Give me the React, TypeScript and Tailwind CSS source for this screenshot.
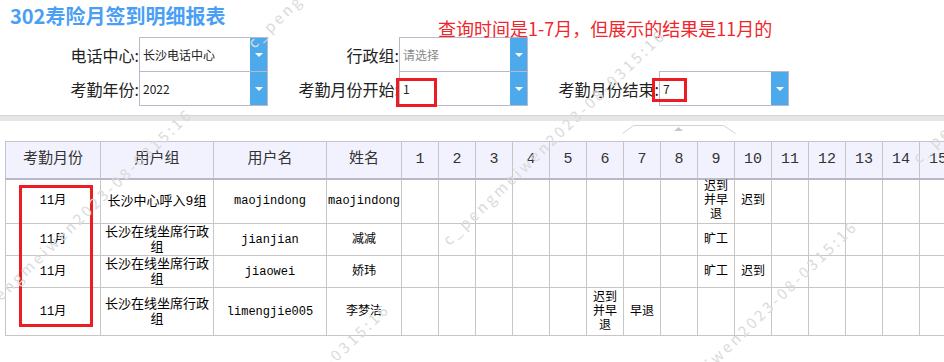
import React from 'react';

const days = Array.from({ length: 31 }, (_, i) => i + 1);

type Row = {
  month: string;
  group: string;
  user: string;
  name: string;
  h: string;
  marks: Record<number, string>;
};

const rows: Row[] = [
  { month: '11月', group: '长沙中心呼入9组', user: 'maojindong', name: 'maojindong', h: 'h-[45px]', marks: { 9: '迟到并早退', 10: '迟到' } },
  { month: '11月', group: '长沙在线坐席行政组', user: 'jianjian', name: '减减', h: 'h-[32px]', marks: { 9: '旷工' } },
  { month: '11月', group: '长沙在线坐席行政组', user: 'jiaowei', name: '娇玮', h: 'h-[32px]', marks: { 9: '旷工', 10: '迟到' } },
  { month: '11月', group: '长沙在线坐席行政组', user: 'limengjie005', name: '李梦洁', h: 'h-[48px]', marks: { 6: '迟到并早退', 7: '早退' } },
];

const cjk = "font-['Noto_Sans_CJK_SC','Liberation_Sans',sans-serif]";
const mono = "font-['Liberation_Mono','Noto_Sans_CJK_SC',monospace]";

function Select({ value, muted, width }: { value: string; muted?: boolean; width: string }) {
  return (
    <div className={`flex h-[35px] border border-[#b9b9c9] bg-white ${width}`}>
      <div className={`flex flex-1 items-center pl-[3px] text-[12px] ${muted ? 'text-[#8a8a8a]' : 'text-[#222]'}`}>
        {value}
      </div>
      <div className="flex w-[17px] items-center justify-center bg-[#4ba9ec]">
        <svg width="8" height="4" viewBox="0 0 8 4">
          <path d="M0 0 L8 0 L4 4 Z" fill="#fff" />
        </svg>
      </div>
    </div>
  );
}

function Label({ text, width }: { text: string; width: string }) {
  return <div className={`text-right text-[16px] text-[#222] ${width}`}>{text}</div>;
}

const cell = 'border border-[#c6c6c6] px-px text-center align-middle text-[12px] leading-[14px] text-black';
const head = 'border border-[#c6c6c6] border-b-2 border-b-[#b9b9c4] bg-[#f2f2fe] px-px text-center align-middle text-[15px] font-normal text-[#333]';

const mark = 'pointer-events-none absolute origin-bottom-left -rotate-[44deg] whitespace-nowrap text-[15px] leading-[15px] tracking-[3px] text-[#dadada] font-[\'Liberation_Sans\',sans-serif]';
const wm = 'c_pengmeiwen2023-08-0315:16';

export default function App() {
  return (
    <div className={`relative h-[362px] w-full overflow-hidden bg-white ${cjk}`}>
      <div className="h-[37px] pl-[10px] pt-[2px] text-[20px] font-bold leading-[28px] text-[#4a9ff5]">
        302寿险月签到明细报表
      </div>

      <div className="flex items-center">
        <Label text="电话中心:" width="w-[139px]" />
        <Select value="长沙电话中心" width="w-[129px]" />
        <Label text="行政组:" width="w-[131px]" />
        <Select value="请选择" muted width="w-[129px]" />
      </div>
      <div className="-mt-px flex items-center">
        <Label text="考勤年份:" width="w-[139px]" />
        <Select value="2022" width="w-[129px]" />
        <Label text="考勤月份开始:" width="w-[131px]" />
        <Select value="1" width="w-[129px]" />
        <Label text="考勤月份结束:" width="w-[131px]" />
        <Select value="7" width="w-[130px]" />
      </div>

      <div className="mt-[9px] h-[6px] border-t border-[#d4d4d4] bg-[#e6e6e6]" />
      <div className="mt-[4px] ml-[622px] h-[9px]">
        <svg width="114" height="9" viewBox="0 0 114 9">
          <path d="M0.5 8.5 L11.5 0.5 L101.5 0.5 L113.5 8.5" fill="none" stroke="#d2d2d2" />
          <path d="M52 6 L56.5 2 L61 6 Z" fill="#c8c8c8" />
        </svg>
      </div>

      <div className="ml-[5px] mt-[7px]">
        <table className={`w-[1543px] table-fixed border-collapse ${mono}`}>
          <colgroup>
            <col className="w-[95px]" />
            <col className="w-[113px]" />
            <col className="w-[113px]" />
            <col className="w-[75px]" />
            {days.map((d) => (
              <col key={d} className="w-[37px]" />
            ))}
          </colgroup>
          <thead>
            <tr className="h-[37px]">
              <th className={head}>考勤月份</th>
              <th className={head}>用户组</th>
              <th className={head}>用户名</th>
              <th className={head}>姓名</th>
              {days.map((d) => (
                <th key={d} className={head}>{d}</th>
              ))}
            </tr>
          </thead>
          <tbody>
            {rows.map((r, i) => (
              <tr key={i} className={r.h}>
                <td className={cell}>{r.month}</td>
                <td className={`${cell} text-[13px] leading-[15px]`}>{r.group}</td>
                <td className={cell}>{r.user}</td>
                <td className={cell}>{r.name}</td>
                {days.map((d) => (
                  <td key={d} className={cell}>{r.marks[d] ?? ''}</td>
                ))}
              </tr>
            ))}
          </tbody>
        </table>
      </div>

      {/* annotations */}
      <div className="absolute left-[438px] top-[19px] text-[18px] leading-[18px] text-[#f0262c]">
        查询时间是1-7月，但展示的结果是11月的
      </div>
      <div className="pointer-events-none absolute left-[396px] top-[78px] h-[29px] w-[41px] border-[3px] border-[#ec1c24]" />
      <div className="pointer-events-none absolute left-[652px] top-[78px] h-[24px] w-[35px] border-[3px] border-[#ec1c24]" />
      <div className="pointer-events-none absolute left-[19px] top-[185px] h-[142px] w-[74px] border-[3px] border-[#ec1c24]" />

      {/* watermarks */}
      <span className={`${mark} left-[-23px] top-[311px]`}>{wm}</span>
      <span className={`${mark} left-[450px] top-[232px]`}>{wm}</span>
      <span className={`${mark} left-[642px] top-[423px]`}>{wm}</span>
      <span className={`${mark} left-[255px] top-[35px]`}>{wm}</span>
      <span className={`${mark} left-[920px] top-[150px]`}>{wm}</span>
      <span className={`${mark} left-[174px] top-[506px]`}>{wm}</span>
    </div>
  );
}
